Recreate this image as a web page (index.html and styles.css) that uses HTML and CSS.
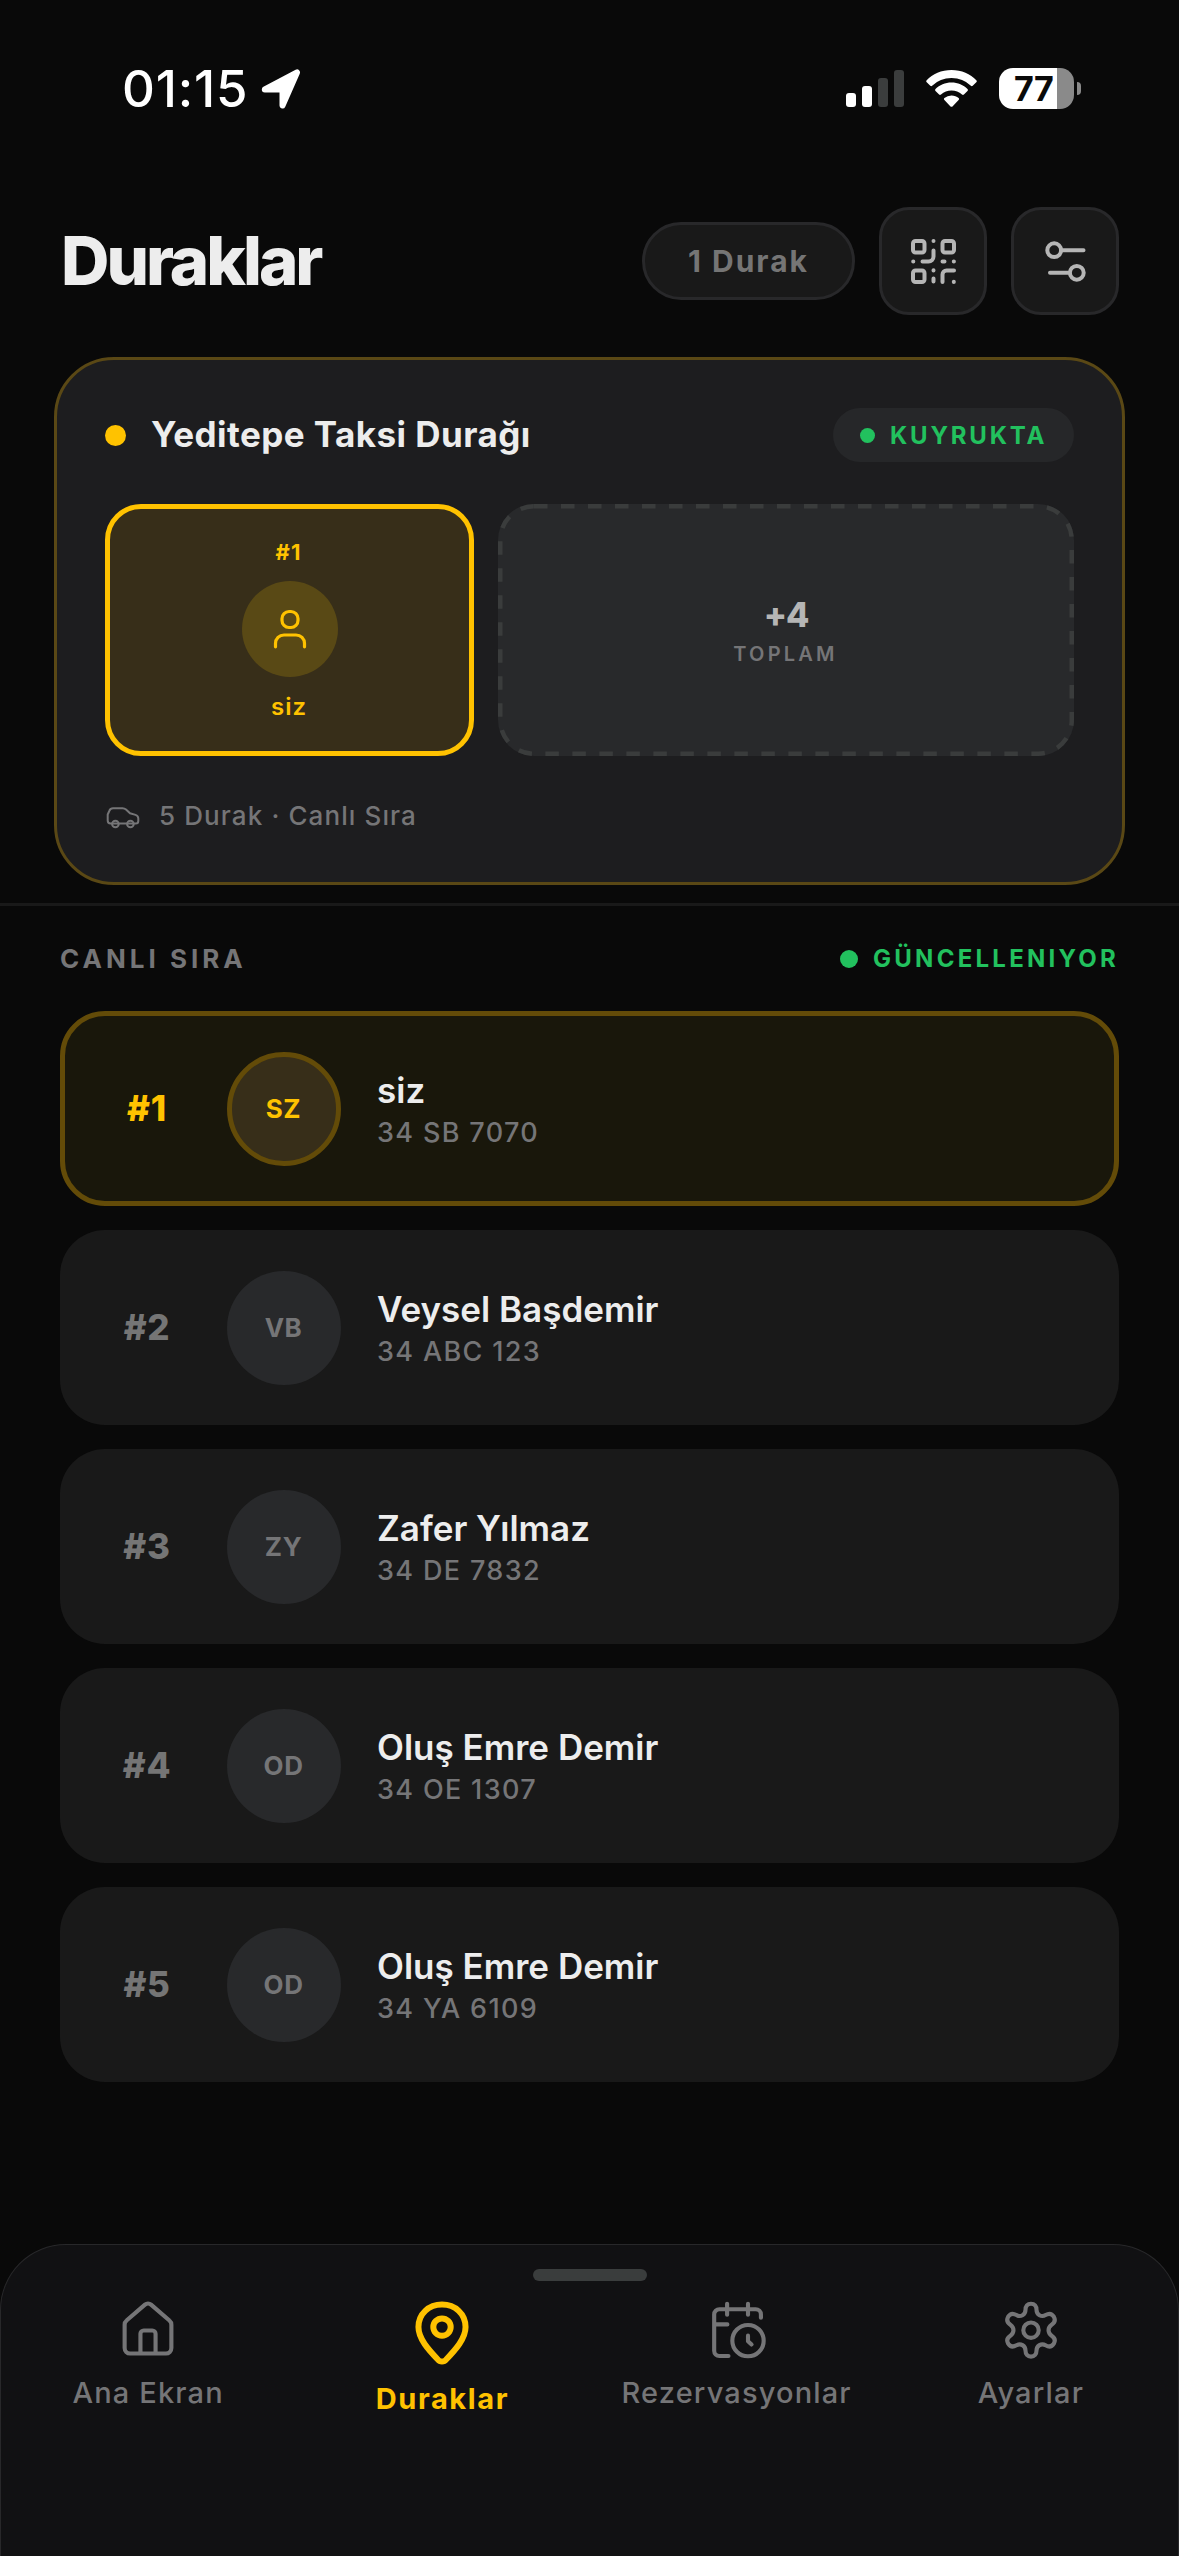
FILE: index.html
```html
<!DOCTYPE html>
<html lang="tr">
<head>
<meta charset="utf-8">
<title>Duraklar</title>
<link rel="stylesheet" href="styles.css">
</head>
<body>
<div class="screen">
  <div class="statusbar">
    <div class="status-left">
      <span class="clock">01:15</span>
      <svg class="ic-location" width="40" height="40" viewBox="0 0 40 40"><path d="M36 3.500 21.500 36.500V20.500H3.800Z" fill="#fff" stroke="#fff" stroke-width="6" stroke-linejoin="round"/></svg>
    </div>
    <div class="status-right">
      <svg class="ic-signal" width="58" height="37" viewBox="0 0 58 37"><rect x="0" y="23" width="10" height="14" rx="3" fill="#fff"/><rect x="16" y="16" width="10" height="21" rx="3" fill="#fff"/><rect x="32" y="8" width="10" height="29" rx="3" fill="#3b3d3d"/><rect x="48" y="0" width="10" height="37" rx="3" fill="#3b3d3d"/></svg>
      <svg class="ic-wifi" width="51" height="37" viewBox="0 0 51 37" fill="#fff"><path d="M25.500 0C35.500 0 44.500 4 50.300 10.200q1 1 0 2L46.700 15.700q-.9.9-1.800 0A28 28 0 0 0 25.500 8 28 28 0 0 0 6.100 15.700q-.9.9-1.800 0L.7 12.200q-1-1 0-2C6.500 4 15.500 0 25.500 0Z"/><path d="M25.500 12.500c6.300 0 12 2.500 16 6.500q1 1 0 2l-3.600 3.500q-.9.9-1.900 0a15.500 15.500 0 0 0-21 0q-1 .9-1.900 0L9.500 21q-1-1 0-2c4-4 9.700-6.500 16-6.500Z"/><path d="M25.500 25.500c2.800 0 5.300 1 7.100 2.600q1 1 0 2l-6.100 6.300q-1 .9-2 0l-6.100-6.300q-1-1 0-2a10.800 10.800 0 0 1 7.100-2.600Z"/></svg>
      <div class="battery"><span class="battery-level">77</span></div>
    </div>
  </div>

  <header class="header">
    <h1 class="title">Duraklar</h1>
    <div class="pill">1 Durak</div>
    <div class="icon-button">
      <svg width="45" height="45" viewBox="0 0 45 45" fill="none" stroke="#b5b5b5" stroke-width="4" stroke-linecap="round" stroke-linejoin="round"><rect x="2" y="2" width="11.500" height="11.500" rx="2.500"/><rect x="31.500" y="2" width="11.500" height="11.500" rx="2.500"/><rect x="2" y="31.500" width="11.500" height="11.500" rx="2.500"/><path d="M22.500 2v.1M22.500 11.500v6a5 5 0 0 1-5 5H11.500M2.200 22.500h.1M31.500 22.500h2M42.800 22.500h.1M22.500 31.300v.1M22.500 39.500v3M31.500 43v-7.500a4 4 0 0 1 4-4H43M42.800 42.800v.1"/></svg>
    </div>
    <div class="icon-button">
      <svg width="45" height="45" viewBox="0 0 45 45" fill="none" stroke="#b5b5b5" stroke-width="4" stroke-linecap="round"><circle cx="11.200" cy="11.200" r="6.900"/><path d="M18 11.200h22.500M7 33.800h19"/><circle cx="33.800" cy="33.800" r="6.900"/></svg>
    </div>
  </header>

  <section class="card">
    <div class="card-head">
      <span class="card-dot"></span>
      <h2 class="card-title">Yeditepe Taksi Durağı</h2>
      <div class="badge"><span class="badge-dot"></span><span class="badge-text">KUYRUKTA</span></div>
    </div>
    <div class="tiles">
      <div class="tile tile-me">
        <span class="tile-rank">#1</span>
        <span class="tile-avatar"><svg width="42" height="42" viewBox="0 0 42 42" fill="none" stroke="#ffc200" stroke-width="3.200" stroke-linecap="round"><rect x="13" y="3.500" width="16" height="16" rx="7"/><path d="M6.500 38.800v-3.300a8.500 8.500 0 0 1 8.500-8.500h12a8.500 8.500 0 0 1 8.500 8.500v3.300"/></svg></span>
        <span class="tile-name">siz</span>
      </div>
      <div class="tile tile-more">
        <svg class="tile-dash" width="576" height="252"><rect x="2.250" y="2.250" width="571.500" height="247.500" rx="33.750" fill="none" stroke="#3a3c3c" stroke-width="4.500" stroke-dasharray="13.500 13.500"/></svg>
        <span class="more-count">+4</span>
        <span class="more-label">TOPLAM</span>
      </div>
    </div>
    <div class="card-foot">
      <svg width="36" height="36" viewBox="0 0 36 36" fill="none" stroke="#757577" stroke-width="2" stroke-linecap="round" stroke-linejoin="round"><path d="M5.500 25.500Q2.700 25.500 2.700 22.500V16.500l1.800-4Q5.400 10.300 8 10.300H17.500q2 0 3.500 1.300L25 15.300l5.500 1.600q2.800.9 2.800 3.600v2.500q0 2.500-2.500 2.500Z"/><circle cx="10.400" cy="26" r="3.300"/><circle cx="25.400" cy="26" r="3.300"/></svg>
      <span class="foot-text">5 Durak · Canlı Sıra</span>
    </div>
  </section>

  <section class="queue">
    <div class="queue-head">
      <span class="queue-title">CANLI SIRA</span>
      <span class="live"><span class="live-dot"></span><span class="live-text">GÜNCELLENIYOR</span></span>
    </div>
    <div class="row row-me"><span class="rank">#1</span><span class="avatar">SZ</span><div class="who"><span class="name">siz</span><span class="plate">34 SB 7070</span></div></div>
    <div class="row"><span class="rank">#2</span><span class="avatar">VB</span><div class="who"><span class="name">Veysel Başdemir</span><span class="plate">34 ABC 123</span></div></div>
    <div class="row"><span class="rank">#3</span><span class="avatar">ZY</span><div class="who"><span class="name">Zafer Yılmaz</span><span class="plate">34 DE 7832</span></div></div>
    <div class="row"><span class="rank">#4</span><span class="avatar">OD</span><div class="who"><span class="name">Oluş Emre Demir</span><span class="plate">34 OE 1307</span></div></div>
    <div class="row"><span class="rank">#5</span><span class="avatar">OD</span><div class="who"><span class="name">Oluş Emre Demir</span><span class="plate">34 YA 6109</span></div></div>
  </section>

  <nav class="tabbar">
    <div class="handle"></div>
    <div class="tabs">
      <div class="tab">
        <svg width="66" height="66" viewBox="0 0 24 24" fill="none" stroke="#757577" stroke-width="1.500" stroke-linecap="round" stroke-linejoin="round"><path d="M3.500 9.700c0-.6.200-1.100.7-1.500L10.900 2.400a1.650 1.650 0 0 1 2.200 0l6.700 5.800c.5.400.7.900.7 1.500V18.200a2 2 0 0 1-2 2h-13a2 2 0 0 1-2-2ZM9.250 20.200V13a1.200 1.200 0 0 1 1.200-1.200h3.100a1.200 1.200 0 0 1 1.200 1.200v7.200"/></svg>
        <span class="tab-label">Ana Ekran</span>
      </div>
      <div class="tab tab-active">
        <svg width="72" height="72" viewBox="0 0 24 24" fill="none" stroke="#ffc200" stroke-width="2" stroke-linecap="round" stroke-linejoin="round"><path d="M12 21.200c-.5 0-1-.2-1.400-.7C7.500 17.200 4.150 13.600 4.150 9.700 4.150 5.300 7.600 2.200 12 2.200s7.850 3.100 7.850 7.500c0 3.900-3.350 7.500-6.450 10.800-.4.500-.9.700-1.400.7Z"/><circle cx="12" cy="9.700" r="2.900"/></svg>
        <span class="tab-label">Duraklar</span>
      </div>
      <div class="tab">
        <svg width="66" height="66" viewBox="0 0 24 24" fill="none" stroke="#757577" stroke-width="1.500" stroke-linecap="round" stroke-linejoin="round"><path d="M20.700 7.200V6a1.900 1.900 0 0 0-1.900-1.900h-13.200A1.900 1.900 0 0 0 3.700 6v13.200a1.900 1.900 0 0 0 1.900 1.900H8.900M8.400 2.100v4M16 2.100v4M3.700 9.600H8.500"/><circle cx="16" cy="15.500" r="5.700"/><path d="M16 13.700v2l1.300 1.200"/></svg>
        <span class="tab-label">Rezervasyonlar</span>
      </div>
      <div class="tab">
        <svg width="66" height="66" viewBox="0 0.300 24 24" fill="none" stroke="#757577" stroke-width="1.500" stroke-linejoin="round"><circle cx="12" cy="12" r="2.800"/><path d="M12 2.400c1.300 0 2 .9 2 2.200 0 1.800 1.800 2.800 3.300 1.900 1.200-.7 2.300-.5 3 .6.600 1.100.3 2.200-.8 2.900-1.500 1-1.500 3 0 4 1.100.7 1.400 1.800.8 2.900-.7 1.100-1.800 1.300-3 .6-1.500-.9-3.300.1-3.300 1.900 0 1.300-.7 2.200-2 2.200s-2-.9-2-2.200c0-1.800-1.800-2.800-3.300-1.900-1.200.7-2.300.5-3-.6-.6-1.100-.3-2.200.8-2.900 1.500-1 1.500-3 0-4-1.100-.7-1.400-1.800-.8-2.900.7-1.100 1.800-1.300 3-.6C8.200 7.400 10 6.400 10 4.600c0-1.300.7-2.200 2-2.200Z"/></svg>
        <span class="tab-label">Ayarlar</span>
      </div>
    </div>
  </nav>
</div>
</body>
</html>
```
FILE: styles.css
```css
* { box-sizing: border-box; margin: 0; padding: 0; }

body {
  width: 1179px;
  height: 2556px;
  background: #090909;
  color: #ededed;
  font-family: Inter, "Liberation Sans", sans-serif;
  overflow: hidden;
}

svg { display: block; flex: none; }

.screen { display: flex; flex-direction: column; height: 2556px; }

/* Status bar */
.statusbar {
  display: flex;
  justify-content: space-between;
  align-items: center;
  height: 177px;
  padding: 0 105px 0 122px;
}
.status-left { display: flex; align-items: center; gap: 11px; color: #fff; }
.clock { width: 128px; font-size: 51px; font-weight: 500; line-height: 60px; letter-spacing: 0.800px; white-space: nowrap; }
.status-right { display: flex; align-items: center; gap: 22px; }
.battery {
  position: relative;
  width: 75px;
  height: 41px;
  border-radius: 14px;
  background: linear-gradient(90deg, #fff 58px, #8a8a8a 58px);
}
.battery::after {
  content: "";
  position: absolute;
  left: 78px;
  top: 14px;
  width: 4px;
  height: 13px;
  border-radius: 0 6px 6px 0;
  background: #8a8a8a;
}
.battery-level {
  display: block;
  padding-left: 15px;
  font-size: 34px;
  font-weight: 700;
  line-height: 42px;
  letter-spacing: -0.500px;
  color: #090909;
}

/* Header */
.header {
  display: flex;
  align-items: center;
  gap: 24px;
  height: 168px;
  padding: 0 60px;
}
.title {
  flex: 1;
  padding-left: 1px;
  font-size: 67px;
  font-weight: 800;
  line-height: 80px;
  letter-spacing: -3px;
  color: #ededed;
}
.pill {
  width: 213px;
  height: 78px;
  border: 3px solid #28282a;
  border-radius: 39px;
  background: #191919;
  color: #757575;
  font-size: 30px;
  font-weight: 700;
  line-height: 72px;
  letter-spacing: 2px;
  text-align: center;
}
.icon-button {
  display: grid;
  place-items: center;
  width: 108px;
  height: 108px;
  border: 3px solid #28282a;
  border-radius: 30px;
  background: #191919;
}

/* Station card */
.card {
  display: flex;
  flex-direction: column;
  height: 528px;
  margin: 12px 54px 18px;
  padding: 48px;
  border: 3px solid #5a4815;
  border-radius: 60px;
  background: #1d1d1f;
}
.card-head { display: flex; align-items: center; height: 54px; }
.card-dot { width: 21px; height: 21px; border-radius: 50%; background: #ffc200; }
.card-title {
  flex: 1;
  margin-left: 25px;
  padding-bottom: 2px;
  font-size: 35px;
  font-weight: 700;
  letter-spacing: 0.450px;
  color: #ededed;
}
.badge {
  display: flex;
  align-items: center;
  gap: 15px;
  width: 241px;
  height: 54px;
  padding-left: 27px;
  border-radius: 27px;
  background: #262729;
}
.badge-dot { width: 15px; height: 15px; border-radius: 50%; background: #22c15e; }
.badge-text { font-size: 24px; font-weight: 700; letter-spacing: 2.800px; color: #22c15e; }
.tiles { display: flex; gap: 24px; height: 252px; margin-top: 42px; }
.tile {
  position: relative;
  display: flex;
  flex-direction: column;
  align-items: center;
  justify-content: center;
  border-radius: 36px;
}
.tile-me { width: 369px; border: 5px solid #ffc200; background: #372e19; color: #ffc200; }
.tile-rank { font-size: 22px; font-weight: 700; line-height: 28px; letter-spacing: 1px; margin-right: 2px; }
.tile-avatar {
  display: grid;
  place-items: center;
  width: 96px;
  height: 96px;
  margin: 15px 0;
  border-radius: 50%;
  background: #594915;
}
.tile-name { font-size: 24px; font-weight: 600; line-height: 30px; letter-spacing: 1px; margin-right: 1px; }
.tile-more { flex: 1; background: #28292b; }
.tile-dash { position: absolute; left: 0; top: 0; }
.more-count { margin-top: 1px; font-size: 34px; font-weight: 800; line-height: 42px; letter-spacing: -1px; color: #b5b5b5; }
.more-label { margin: 5px 1px 0 0; font-size: 20px; font-weight: 600; line-height: 26px; letter-spacing: 3.200px; color: #757577; }
.card-foot { display: flex; align-items: center; gap: 18px; margin-top: 42px; height: 36px; }
.foot-text { padding-bottom: 2px; font-size: 26px; font-weight: 500; letter-spacing: 1.100px; color: #757577; }

/* Queue */
.queue {
  display: flex;
  flex-direction: column;
  gap: 24px;
  flex: 1;
  padding: 0 60px;
  border-top: 3px solid #191919;
}
.queue-head { display: flex; justify-content: space-between; align-items: center; height: 81px; padding-top: 24px; }
.queue-title { font-size: 26px; font-weight: 700; letter-spacing: 4px; color: #757577; }
.live { display: flex; align-items: center; gap: 15px; }
.live-dot { width: 18px; height: 18px; border-radius: 50%; background: #22c15e; }
.live-text { font-size: 24px; font-weight: 700; letter-spacing: 3.250px; color: #22c15e; }
.row {
  display: flex;
  align-items: center;
  height: 195px;
  padding-left: 45px;
  border-radius: 45px;
  background: #191919;
}
.row-me { padding-left: 40px; border: 5px solid #634b08; background: #19170b; }
.rank { width: 84px; padding-bottom: 1px; font-size: 35px; font-weight: 800; letter-spacing: 0.700px; text-align: center; color: #757575; }
.avatar {
  width: 114px;
  height: 114px;
  margin: 0 36px 0 38px;
  border-radius: 50%;
  background: #28292b;
  color: #757577;
  font-size: 26px;
  font-weight: 700;
  line-height: 114px;
  letter-spacing: 0.500px;
  text-indent: -1px;
  text-align: center;
}
.row-me .rank { color: #ffc200; }
.row-me .avatar { border: 5px solid #634b08; background: #372e19; color: #ffc200; line-height: 104px; }
.who { display: flex; flex-direction: column; padding-top: 5px; }
.name { font-size: 35px; font-weight: 600; line-height: 43px; color: #ededed; }
.plate { font-size: 27px; font-weight: 500; line-height: 42px; letter-spacing: 1.350px; color: #757577; }

/* Tab bar */
.tabbar {
  height: 312px;
  padding-top: 24px;
  border: 1.500px solid #28282a;
  border-bottom: 0;
  border-radius: 66px 66px 0 0;
  background: #111113;
}
.handle { width: 114px; height: 12px; margin: 0 auto 17px; border-radius: 6px; background: #3a3d3d; }
.tabs { display: grid; grid-template-columns: repeat(4, 1fr); }
.tab { display: flex; flex-direction: column; align-items: center; gap: 11px; }
.tab-label { font-size: 29px; font-weight: 500; line-height: 36px; letter-spacing: 1.150px; color: #757577; }
.tab-active .tab-label { font-weight: 700; letter-spacing: 1.600px; color: #ffc200; }
```
